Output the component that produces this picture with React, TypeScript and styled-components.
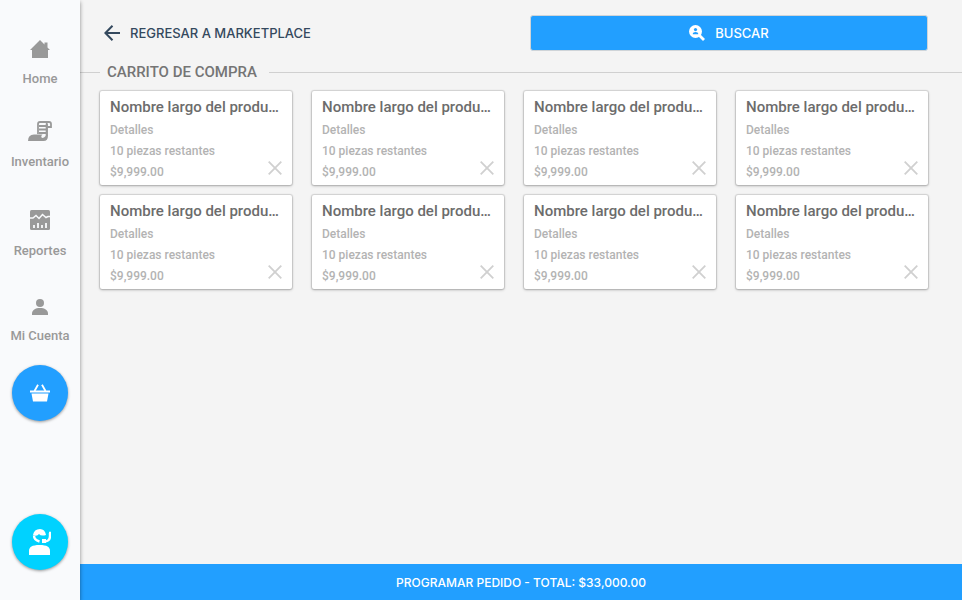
import React from "react";
import styled, { createGlobalStyle } from "styled-components";

const GlobalStyle = createGlobalStyle`
  *, *::before, *::after { box-sizing: border-box; }
  body {
    margin: 0;
    background: #f4f4f4;
    font-family: Roboto, "Liberation Sans", sans-serif;
  }
  button { font: inherit; border: 0; margin: 0; padding: 0; cursor: pointer; }
  svg { display: block; flex: none; }
`;

const Page = styled.div`
  display: flex;
  min-height: 100vh;
`;

const Sidebar = styled.aside`
  flex: none;
  width: 80px;
  display: flex;
  flex-direction: column;
  align-items: center;
  padding-bottom: 30px;
  background: #f9fafc;
  box-shadow: 0 2px 4px rgba(0, 0, 0, 0.45);
  z-index: 1;
`;

const Nav = styled.nav`
  display: flex;
  flex-direction: column;
  align-items: center;
  padding-bottom: 19px;
`;

const NavLink = styled.a<{ $space: number }>`
  display: flex;
  flex-direction: column;
  align-items: center;
  gap: 11px;
  margin-top: ${(p) => p.$space}px;
  color: #999;
  font-size: 13px;
  font-weight: 500;
  line-height: 20px;
  text-decoration: none;
  white-space: nowrap;
`;

const RoundButton = styled.button<{ $color: string }>`
  display: grid;
  place-items: center;
  width: 56px;
  height: 56px;
  border-radius: 50%;
  color: #fff;
  background: ${(p) => p.$color};
  box-shadow: 0 1px 3px rgba(0, 0, 0, 0.4);
`;

const Spacer = styled.div`
  flex: 1;
`;

const Main = styled.main`
  flex: 1;
  min-width: 0;
  display: flex;
  flex-direction: column;
`;

const TopBar = styled.header`
  display: grid;
  grid-template-columns: 1fr 1fr;
  align-items: center;
  gap: 32px;
  padding: 15px 34px 0 20px;
`;

const BackButton = styled.button`
  justify-self: start;
  display: flex;
  align-items: center;
  gap: 10px;
  padding-left: 4px;
  background: none;
  color: #34495e;
  font-family: Inter, sans-serif;
  font-size: 13px;
  font-weight: 500;
  line-height: 20px;
`;

const SearchButton = styled.button`
  display: flex;
  align-items: center;
  justify-content: center;
  gap: 10px;
  height: 36px;
  border: 1px solid #cfd4d8;
  border-radius: 3px;
  background: #229fff;
  color: #fff;
  font-family: Inter, sans-serif;
  font-size: 13px;
  font-weight: 500;
`;

const SectionTitle = styled.h1`
  display: flex;
  align-items: center;
  gap: 12px;
  margin: 10px 0 8px;
  color: #757575;
  font-size: 15px;
  font-weight: 500;
  line-height: 22px;

  &::before, &::after {
    content: "";
    height: 1px;
    background: #d0d0d0;
  }
  &::before { width: 20px; margin-right: -5px; }
  &::after { flex: 1; }
`;

const CardGrid = styled.ul`
  display: grid;
  grid-template-columns: repeat(auto-fill, minmax(180px, 1fr));
  gap: 10px 20px;
  margin: 0;
  padding: 0 34px 20px 20px;
  list-style: none;
`;

const Card = styled.li`
  display: grid;
  grid-template-columns: 1fr auto;
  align-items: end;
  padding: 5px 10px 2px;
  border-radius: 2px;
  background: #fff;
  box-shadow: 0 0 1px 1px rgba(0, 0, 0, 0.12), 0 1px 3px rgba(0, 0, 0, 0.24);
`;

const CardTitle = styled.h2`
  grid-column: 1 / -1;
  min-width: 0;
  margin: 0 0 1px;
  overflow: hidden;
  color: #6c6c6c;
  font-size: 15px;
  font-weight: 500;
  line-height: 23px;
  text-overflow: ellipsis;
  white-space: nowrap;
`;

const CardLine = styled.p`
  margin: 0;
  color: #b3b3b3;
  font-size: 12px;
  font-weight: 500;
  line-height: 21px;
`;

const RemoveButton = styled.button`
  margin-bottom: 8px;
  background: none;
  color: #d0d0d0;
`;

const OrderButton = styled.button`
  height: 36px;
  margin-top: auto;
  background: #229fff;
  color: #fff;
  font-family: Inter, sans-serif;
  font-size: 12px;
  font-weight: 500;
`;

const HomeIcon = () => (
  <svg width="20" height="18" viewBox="0 0 20 18" fill="currentColor" aria-hidden="true">
    <path d="M10 0 14.5 4.4V2.5H17.5V7.4L20 10H18V18H2V10H0Z" />
  </svg>
);

const ScrollIcon = () => (
  <svg width="24" height="20" viewBox="0 0 24 20" fill="none" stroke="currentColor" aria-hidden="true">
    <path d="M10 13V3Q10 1 12 1H21Q23 1 23 3V6H19M19 3V15" strokeWidth="1.8" />
    <path d="M20 1Q18.6 1.4 18.6 3V15" strokeWidth="1.8" />
    <path d="M11 5H18M11 8.5H18M11 12H18" strokeWidth="1.8" />
    <path
      d="M0 20Q0 13.5 6 13.5H14.5Q12.5 15 13.5 16.5Q15.5 18 18 14.5H20Q20 20 15.5 20Z"
      fill="currentColor"
      stroke="none"
    />
  </svg>
);

const ReportIcon = () => (
  <svg width="20" height="20" viewBox="0 0 20 20" aria-hidden="true">
    <rect width="20" height="20" rx="1.5" fill="currentColor" />
    <path d="M0 8H3L6 5.5 9 8.5 12.5 4.5 16 7.5 18 6.5H20" fill="none" stroke="#f9fafc" strokeWidth="1.5" />
    <path d="M4 18V15M8 18V13M12 18V15M16 18V13" stroke="#f9fafc" strokeWidth="1.8" />
  </svg>
);

const PersonIcon = () => (
  <svg width="16" height="16" viewBox="0 0 16 16" fill="currentColor" aria-hidden="true">
    <circle cx="8" cy="4" r="4" />
    <path d="M0 16V14.5C0 11 3.5 9 8 9S16 11 16 14.5V16Z" />
  </svg>
);

const BasketIcon = () => (
  <svg width="20" height="18" viewBox="0 0 20 18" fill="currentColor" aria-hidden="true">
    <path d="M0 6.5H20V8.5H0ZM1.5 9.5H18.5L17 17.5H3Z" />
    <path d="M4.5 7 8 .8M15.5 7 12 .8" fill="none" stroke="currentColor" strokeWidth="1.8" />
  </svg>
);

const AgentIcon = () => (
  <svg width="22" height="26" viewBox="0 0 22 26" fill="none" aria-hidden="true">
    <path d="M0 26V22C0 18 3 16 10.5 16S21 18 21 22V26Z" fill="currentColor" />
    <path d="M4 6Q5 0 11 0 16 0 17 6Q12 7.5 10 5Q8 8 4 6Z" fill="currentColor" />
    <path d="M5 6.5Q5 11 10.5 12.5M20 4H21V7Q21 13 14 12.5" stroke="currentColor" strokeWidth="2.4" />
    <path d="M13 10H17V14H13Z" fill="currentColor" />
  </svg>
);

const BackIcon = () => (
  <svg width="16" height="16" viewBox="0 0 16 16" fill="none" stroke="currentColor" strokeWidth="2" aria-hidden="true">
    <path d="M8.5.7 1.4 8l7.1 7.3M1.5 8H16" />
  </svg>
);

const SearchIcon = () => (
  <svg width="16" height="16" viewBox="0 0 16 16" aria-hidden="true">
    <circle cx="6.5" cy="6.5" r="6.5" fill="currentColor" />
    <path d="M10 10 15 15" stroke="currentColor" strokeWidth="2.8" />
    <circle cx="6.5" cy="4.6" r="1.6" fill="#229fff" />
    <path d="M3.8 9.3V8.5Q3.8 7 6.5 7T9.2 8.5V9.3Z" fill="#229fff" />
  </svg>
);

const CloseIcon = () => (
  <svg width="14" height="14" viewBox="0 0 14 14" fill="none" stroke="currentColor" strokeWidth="1.8" aria-hidden="true">
    <path d="M.7.7 13.3 13.3M13.3.7.7 13.3" />
  </svg>
);

const links = [
  { label: "Home", space: 40, Icon: HomeIcon },
  { label: "Inventario", space: 32, Icon: ScrollIcon },
  { label: "Reportes", space: 38, Icon: ReportIcon },
  { label: "Mi Cuenta", space: 38, Icon: PersonIcon },
];

const products = Array.from({ length: 8 }, (_, id) => ({
  id,
  name: "Nombre largo del producto",
  details: "Detalles",
  stock: "10 piezas restantes",
  price: "$9,999.00",
}));

export default function App() {
  return (
    <Page>
      <GlobalStyle />
      <Sidebar>
        <Nav>
          {links.map(({ label, space, Icon }) => (
            <NavLink key={label} href="#" $space={space}>
              <Icon />
              {label}
            </NavLink>
          ))}
        </Nav>
        <RoundButton type="button" $color="#229fff" aria-label="Carrito">
          <BasketIcon />
        </RoundButton>
        <Spacer />
        <RoundButton type="button" $color="#00d2ff" aria-label="Soporte">
          <AgentIcon />
        </RoundButton>
      </Sidebar>
      <Main>
        <TopBar>
          <BackButton type="button">
            <BackIcon />
            REGRESAR A MARKETPLACE
          </BackButton>
          <SearchButton type="button">
            <SearchIcon />
            BUSCAR
          </SearchButton>
        </TopBar>
        <SectionTitle>CARRITO DE COMPRA</SectionTitle>
        <CardGrid>
          {products.map((product) => (
            <Card key={product.id}>
              <CardTitle>{product.name}</CardTitle>
              <div>
                <CardLine>{product.details}</CardLine>
                <CardLine>{product.stock}</CardLine>
                <CardLine>{product.price}</CardLine>
              </div>
              <RemoveButton type="button" aria-label="Quitar producto">
                <CloseIcon />
              </RemoveButton>
            </Card>
          ))}
        </CardGrid>
        <OrderButton type="button">PROGRAMAR PEDIDO - TOTAL: $33,000.00</OrderButton>
      </Main>
    </Page>
  );
}
